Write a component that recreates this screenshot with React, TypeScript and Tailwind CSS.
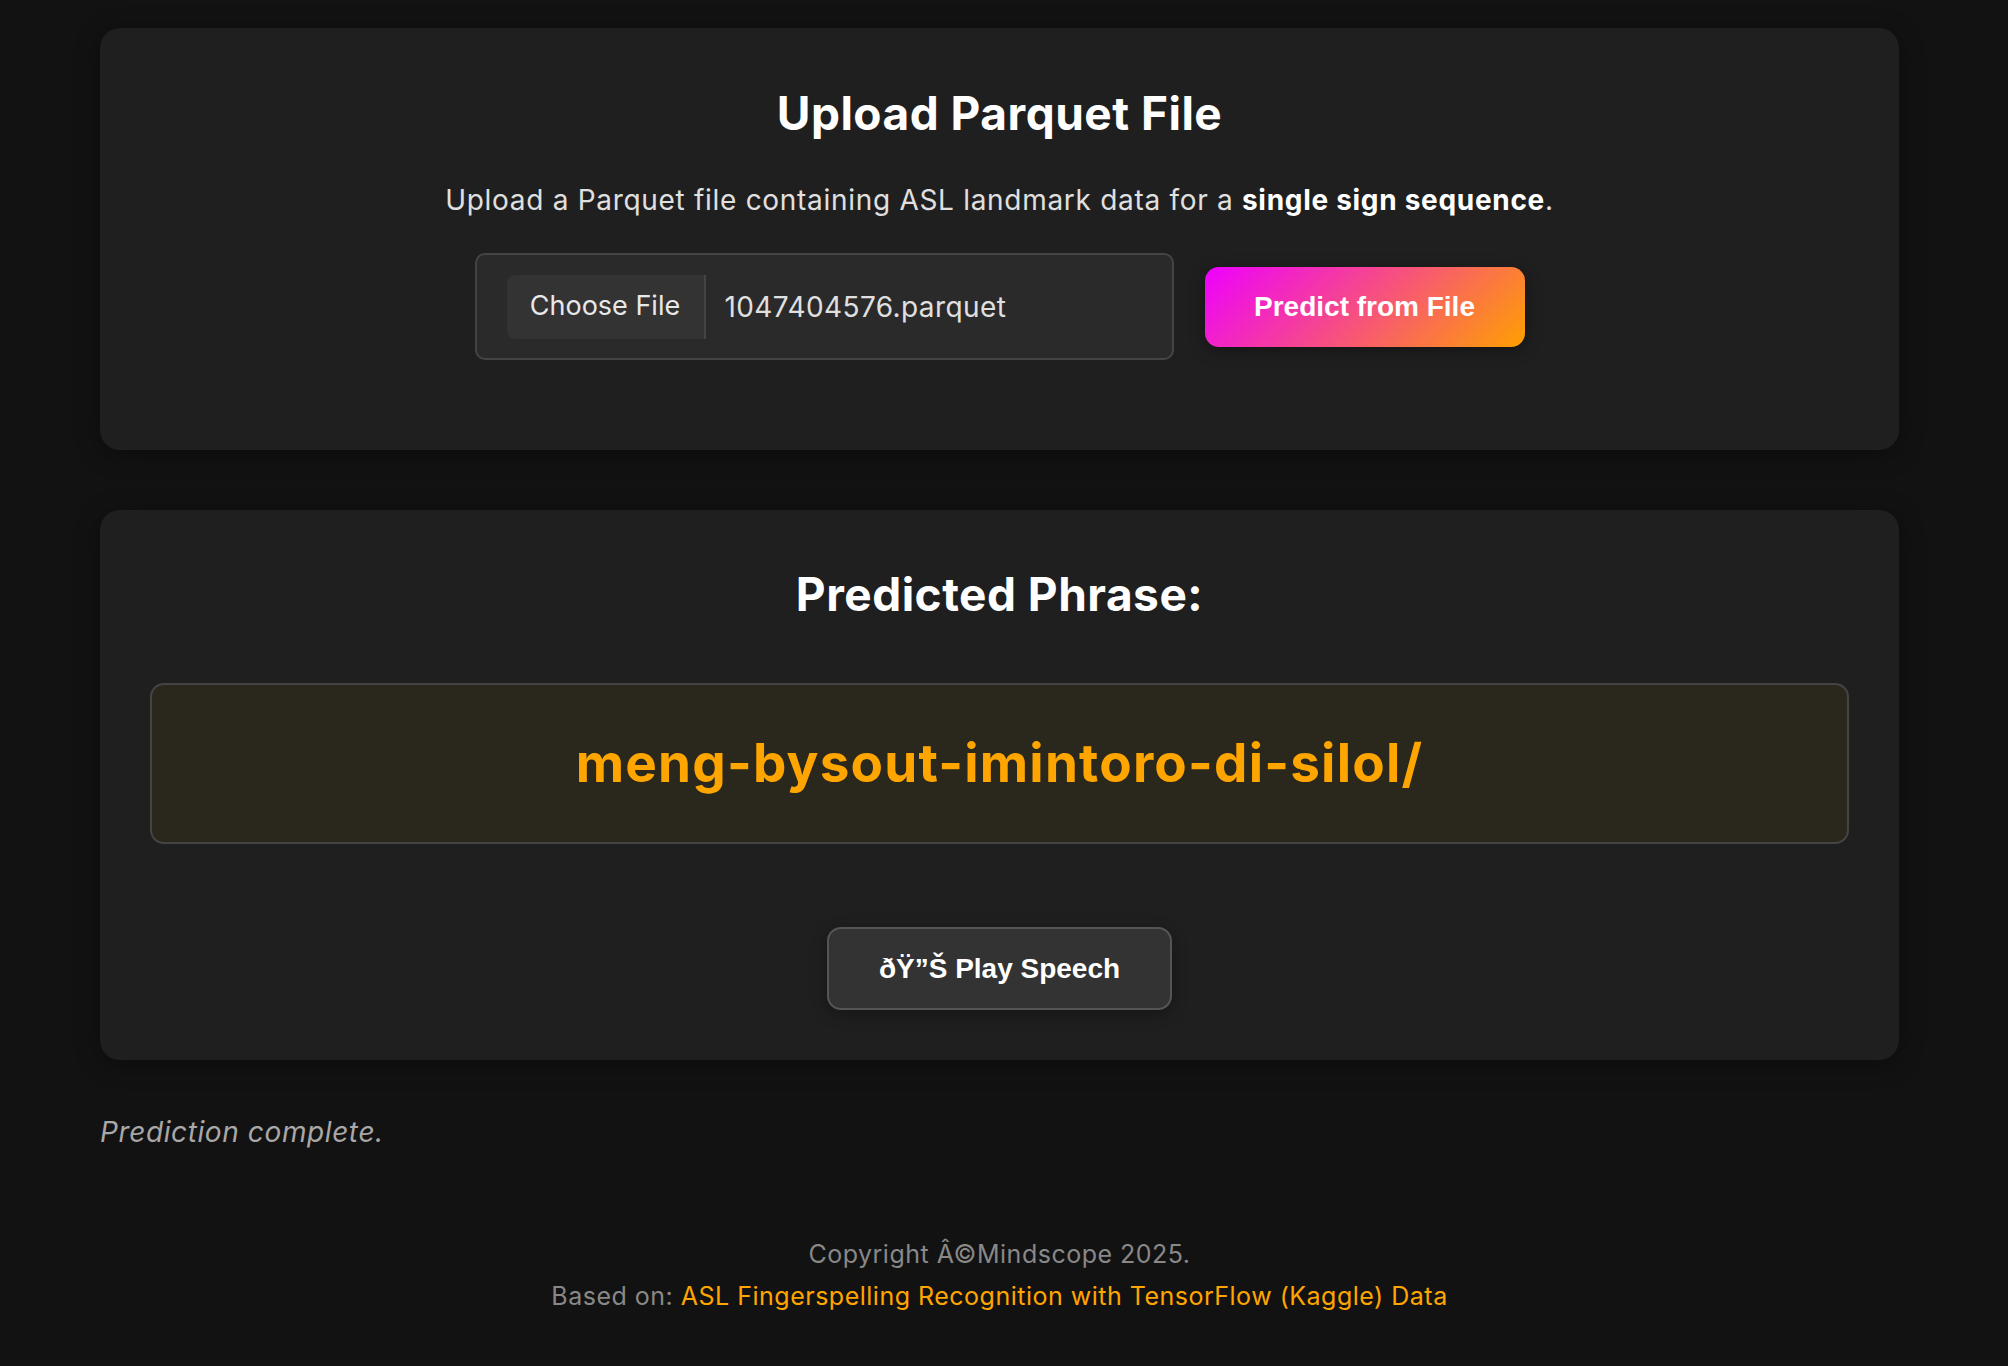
const sans = "font-['Inter','Noto_Sans',sans-serif]";
const arial = "font-['Liberation_Sans',Arial,sans-serif]";

function UploadCard() {
  return (
    <section className="rounded-[20px] bg-[#1f1f1f] px-[50px] pt-[56px] pb-[90px] shadow-[0_4px_24px_rgba(0,0,0,0.35)]">
      <h2 className="text-center text-[46px] font-bold leading-[58px] tracking-[0.5px] text-white">
        Upload Parquet File
      </h2>
      <p className="mt-[37px] text-center text-[28px] leading-[42px] tracking-[0.7px] text-[#e0e0e0]">
        Upload a Parquet file containing ASL landmark data for a{" "}
        <strong className="font-bold text-white">single sign sequence</strong>.
      </p>
      <div className="mt-[32px] flex items-center justify-center gap-[31px]">
        <div className="flex h-[107px] w-[699px] items-center rounded-[10px] border-2 border-[#444] bg-[#2a2a2a] pl-[30px]">
          <span className="flex h-[64px] w-[199px] items-center justify-center rounded-l-[8px] border-r-2 border-[#444] bg-[#333] text-[27px] text-[#e8e8e8]">
            Choose File
          </span>
          <span className="ml-[19px] text-[28px] tracking-[0.4px] text-[#e0e0e0]">1047404576.parquet</span>
        </div>
        <button
          className={`h-[80px] w-[320px] rounded-[14px] bg-[linear-gradient(135deg,#ee00ff,#ffa000)] ${arial} text-[28px] font-bold text-white shadow-[0_4px_16px_rgba(0,0,0,0.35)]`}
        >
          Predict from File
        </button>
      </div>
    </section>
  );
}

function ResultCard() {
  return (
    <section className="mt-[60px] rounded-[20px] bg-[#1f1f1f] px-[50px] pt-[55px] pb-[50px] shadow-[0_4px_24px_rgba(0,0,0,0.35)]">
      <h2 className="text-center text-[46px] font-bold leading-[58px] tracking-[0.5px] text-white">
        Predicted Phrase:
      </h2>
      <div className="mt-[60px] flex h-[161px] items-center justify-center rounded-[14px] border-2 border-[#444] bg-[#2a271d]">
        <span className="text-[53px] font-bold tracking-[1.2px] text-[#ffa500]">meng-bysout-imintoro-di-silol/</span>
      </div>
      <div className="mt-[83px] flex justify-center">
        <button
          className={`h-[83px] w-[345px] rounded-[14px] border-2 border-[#555] bg-[#333] ${arial} text-[28px] font-bold text-white shadow-[0_4px_16px_rgba(0,0,0,0.3)]`}
        >
          ðŸ”Š Play Speech
        </button>
      </div>
    </section>
  );
}

export default function App() {
  return (
    <div className={`min-h-screen bg-[#121212] pt-[28px] pb-[40px] pl-[100px] ${sans}`}>
      <div className="w-[1799px]">
        <UploadCard />
        <ResultCard />
        <p className="mt-[52px] text-[28px] italic leading-[40px] tracking-[0.6px] text-[#a8a8a8]">
          Prediction complete.
        </p>
        <footer className="mt-[81px] text-center text-[25px] leading-[42px] tracking-[0.5px] text-[#888]">
          <p>Copyright Â©Mindscope 2025.</p>
          <p>
            Based on:{" "}
            <a className="text-[#ffa500]" href="#">
              ASL Fingerspelling Recognition with TensorFlow (Kaggle) Data
            </a>
          </p>
        </footer>
      </div>
    </div>
  );
}
